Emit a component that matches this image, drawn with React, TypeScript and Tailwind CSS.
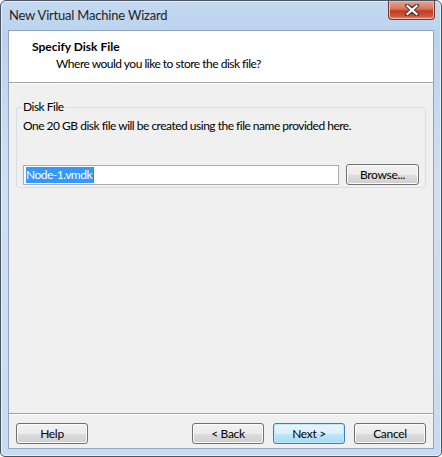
import React from "react";

const FONT = "font-['Lato','Noto_Sans',sans-serif]";

function WinButton({ label, primary = false, className = "" }: { label: string; primary?: boolean; className?: string }) {
  return (
    <button
      className={`h-[21px] rounded-[3px] border text-[12px] leading-none tracking-[-0.3px] text-black ${
        primary
          ? "border-[#3c7fb1] bg-[linear-gradient(#eaf6fd_0%,#d9f0fc_50%,#bee6fd_51%,#a7d9f5_100%)] shadow-[inset_0_0_0_1px_#bfe8fb]"
          : "border-[#707070] bg-[linear-gradient(#f2f2f2_0%,#ebebeb_50%,#dddddd_51%,#cfcfcf_100%)] shadow-[inset_0_0_0_1px_#fcfcfc]"
      } ${className}`}
    >
      {label}
    </button>
  );
}

function CloseButton() {
  return (
    <div className="mr-[6px] flex h-[19px] w-[47px] items-center justify-center rounded-b-[4px] border border-t-0 border-[#6d3a35] bg-[linear-gradient(#e8a493_0%,#d5735f_45%,#c4391e_55%,#d0563c_85%,#e89c80_100%)] shadow-[inset_0_0_0_1px_#ecb8a8]">
      <svg width="14" height="12" viewBox="0 0 14 12">
        <path
          d="M2 1.5 L7 5 L12 1.5 M2 10.5 L7 7 L12 10.5 M2 1.5 L12 10.5 M12 1.5 L2 10.5"
          stroke="#4a3a3a"
          strokeWidth="4"
          strokeLinecap="square"
          fill="none"
        />
        <path d="M2.5 2 L11.5 10 M11.5 2 L2.5 10" stroke="#ffffff" strokeWidth="2.2" strokeLinecap="square" fill="none" />
      </svg>
    </div>
  );
}

export default function App() {
  return (
    <div className={`h-[457px] w-[442px] bg-white ${FONT}`}>
      <div className="flex h-full w-full flex-col rounded-t-[6px] rounded-b-[5px] border border-[#4b5561] bg-[linear-gradient(180deg,#c3d9f1_0%,#bcd3ed_8%,#cfe0f3_40%,#c8dbf0_100%)] shadow-[inset_0_0_0_1px_#e6f0fb]">
        <div className="flex h-[29px] shrink-0 items-start justify-between">
          <span className="pl-[8px] pt-[6px] text-[13px] leading-[16px] tracking-[-0.2px] text-[#1e1e1e]">New Virtual Machine Wizard</span>
          <CloseButton />
        </div>

        <div className="mx-[7px] mb-[7px] flex flex-1 flex-col border border-[#8fa5c0] bg-[#f0f0f0] text-[12px] leading-[16px] tracking-[-0.5px] text-black">
          <div className="flex h-[52px] shrink-0 flex-col border-b border-[#a0a0a0] bg-white pl-[23px] pt-[8px]">
            <span className="font-bold tracking-normal">Specify Disk File</span>
            <span className="pl-[24px] pt-[1px]">Where would you like to store the disk file?</span>
          </div>
          <div className="h-px bg-white" />

          <div className="flex flex-1 flex-col px-[7px] pt-[15px]">
            <fieldset className="h-[89px] rounded-[3px] border border-[#d5dfe5] px-[6px] pb-0 pt-0">
              <legend className="ml-[-1px] px-[1px]">Disk File</legend>
              <p className="mt-[3px]">One 20 GB disk file will be created using the file name provided here.</p>
              <div className="mt-[30px] flex items-center gap-[7px]">
                <div className="flex h-[20px] w-[316px] items-center border border-[#abadb3] bg-white pl-[2px]">
                  <span className="flex h-[16px] items-center bg-[#3399ff] pr-[1px] text-white">Node-1.vmdk</span>
                  <span className="h-[16px] w-px bg-[#cc6600]" />
                </div>
                <WinButton label="Browse..." className="w-[73px]" />
              </div>
            </fieldset>
          </div>

          <div className="mx-0 h-px shrink-0 bg-[#a0a0a0]" />
          <div className="h-px shrink-0 bg-white" />
          <div className="flex h-[33px] shrink-0 items-start px-[7px] pt-[8px]">
            <WinButton label="Help" className="w-[72px]" />
            <div className="flex-1" />
            <div className="flex gap-[9px]">
              <WinButton label="< Back" className="w-[72px]" />
              <WinButton label="Next >" primary className="w-[72px]" />
              <WinButton label="Cancel" className="w-[72px]" />
            </div>
          </div>
        </div>
      </div>
    </div>
  );
}
